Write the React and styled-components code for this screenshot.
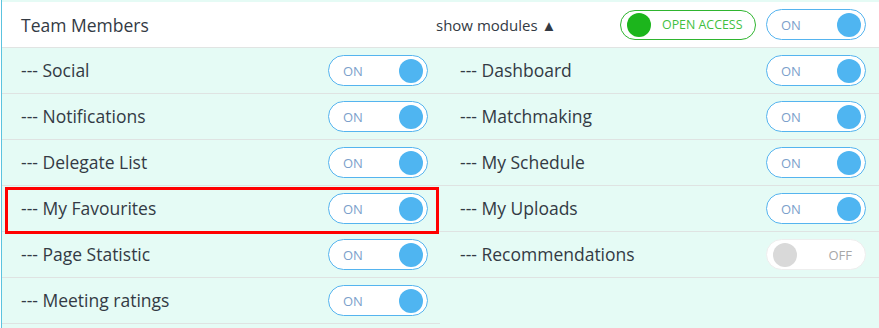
import React from 'react'
import styled, { createGlobalStyle } from 'styled-components'

const GlobalStyle = createGlobalStyle`
  body {
    margin: 0;
    background: #ffffff;
    font-family: "Open Sans", "Liberation Sans", sans-serif;
  }
`

const left = [
  { name: 'Social', on: true },
  { name: 'Notifications', on: true },
  { name: 'Delegate List', on: true },
  { name: 'My Favourites', on: true, mark: true },
  { name: 'Page Statistic', on: true },
  { name: 'Meeting ratings', on: true },
]

const right = [
  { name: 'Dashboard', on: true },
  { name: 'Matchmaking', on: true },
  { name: 'My Schedule', on: true },
  { name: 'My Uploads', on: true },
  { name: 'Recommendations', on: false },
]

const Switch = ({ on }) => (
  <Track $on={on}>
    {on ? <SwitchText $on>ON</SwitchText> : <Knob $on={false} />}
    {on ? <Knob $on /> : <SwitchText>OFF</SwitchText>}
  </Track>
)

const App = () => {
  return (
    <>
      <GlobalStyle />
      <Panel>
        <Header>
          <Title>Team Members</Title>
          <HeaderRight>
            <ShowModules>show modules ▲</ShowModules>
            <Controls>
              <AccessPill>
                <AccessDot />
                <AccessText>OPEN ACCESS</AccessText>
              </AccessPill>
              <Switch on />
            </Controls>
          </HeaderRight>
        </Header>
        <Columns>
          <Column>
            {left.map((m) => (
              <Row key={m.name} $mark={m.mark}>
                <Label>--- {m.name}</Label>
                <Switch on={m.on} />
              </Row>
            ))}
          </Column>
          <Column $right>
            {right.map((m) => (
              <Row key={m.name} $right>
                <Label>--- {m.name}</Label>
                <Switch on={m.on} />
              </Row>
            ))}
          </Column>
        </Columns>
      </Panel>
    </>
  )
}

export default App

export const Panel = styled.div`
  margin-left: 1px;
  min-height: 100vh;
  box-sizing: border-box;
  padding-top: 2px;
  border-left: 1px solid #5cc3df;
  background: #e5fbf5;
`
export const Header = styled.div`
  display: grid;
  grid-template-columns: 434px 1fr;
  align-items: center;
  height: 45px;
  background: #ffffff;
  border-bottom: 1px solid #e1e4e3;
`
export const Title = styled.div`
  padding-left: 19px;
  font-size: 17.5px;
  color: #333a44;
`
export const HeaderRight = styled.div`
  display: flex;
  align-items: center;
  padding-right: 13px;
`
export const ShowModules = styled.div`
  font-size: 15px;
  color: #333a44;
  padding-top: 1px;
`
export const Controls = styled.div`
  margin-left: auto;
  display: flex;
  align-items: center;
  gap: 10px;
`
export const AccessPill = styled.div`
  width: 136px;
  height: 30px;
  box-sizing: border-box;
  border: 1px solid #2fb52f;
  border-radius: 15px;
  display: flex;
  align-items: center;
  padding-left: 6px;
  gap: 11px;
  background: #ffffff;
`
export const AccessDot = styled.div`
  width: 24px;
  height: 24px;
  border-radius: 50%;
  background: #1cb51c;
`
export const AccessText = styled.span`
  font-size: 12.4px;
  color: #3fbf3f;
`
export const Columns = styled.div`
  display: grid;
  grid-template-columns: 438px 1fr;
`
export const Column = styled.div`
  display: flex;
  flex-direction: column;
`
export const Row = styled.div`
  position: relative;
  height: 45px;
  border-bottom: 1px solid #dfe3e2;
  display: flex;
  align-items: center;
  justify-content: space-between;
  padding: 0 ${(p) => (p.$right ? '13px' : '12px')} 0 ${(p) => (p.$right ? '20px' : '19px')};

  &::after {
    content: '';
    display: ${(p) => (p.$mark ? 'block' : 'none')};
    position: absolute;
    top: 1px;
    left: 3px;
    right: 1px;
    bottom: -3px;
    border: 3px solid #ff0000;
    pointer-events: none;
  }
`
export const Label = styled.span`
  font-size: 17.5px;
  color: #333a44;
  margin-top: -2px;
`
export const Track = styled.div`
  width: 100px;
  height: 31px;
  box-sizing: border-box;
  border: 1px solid ${(p) => (p.$on ? '#55b4ef' : '#eeeeee')};
  border-radius: 16px;
  background: #ffffff;
  display: flex;
  align-items: center;
  justify-content: space-between;
  padding: ${(p) => (p.$on ? '0 4px 0 14px' : '0 13px 0 6px')};
`
export const Knob = styled.div`
  width: 24px;
  height: 24px;
  border-radius: 50%;
  background: ${(p) => (p.$on ? '#4fb5f1' : '#d9d9d9')};
`
export const SwitchText = styled.span`
  font-size: 13px;
  color: ${(p) => (p.$on ? '#7c9fcb' : '#a7a7a7')};
`
